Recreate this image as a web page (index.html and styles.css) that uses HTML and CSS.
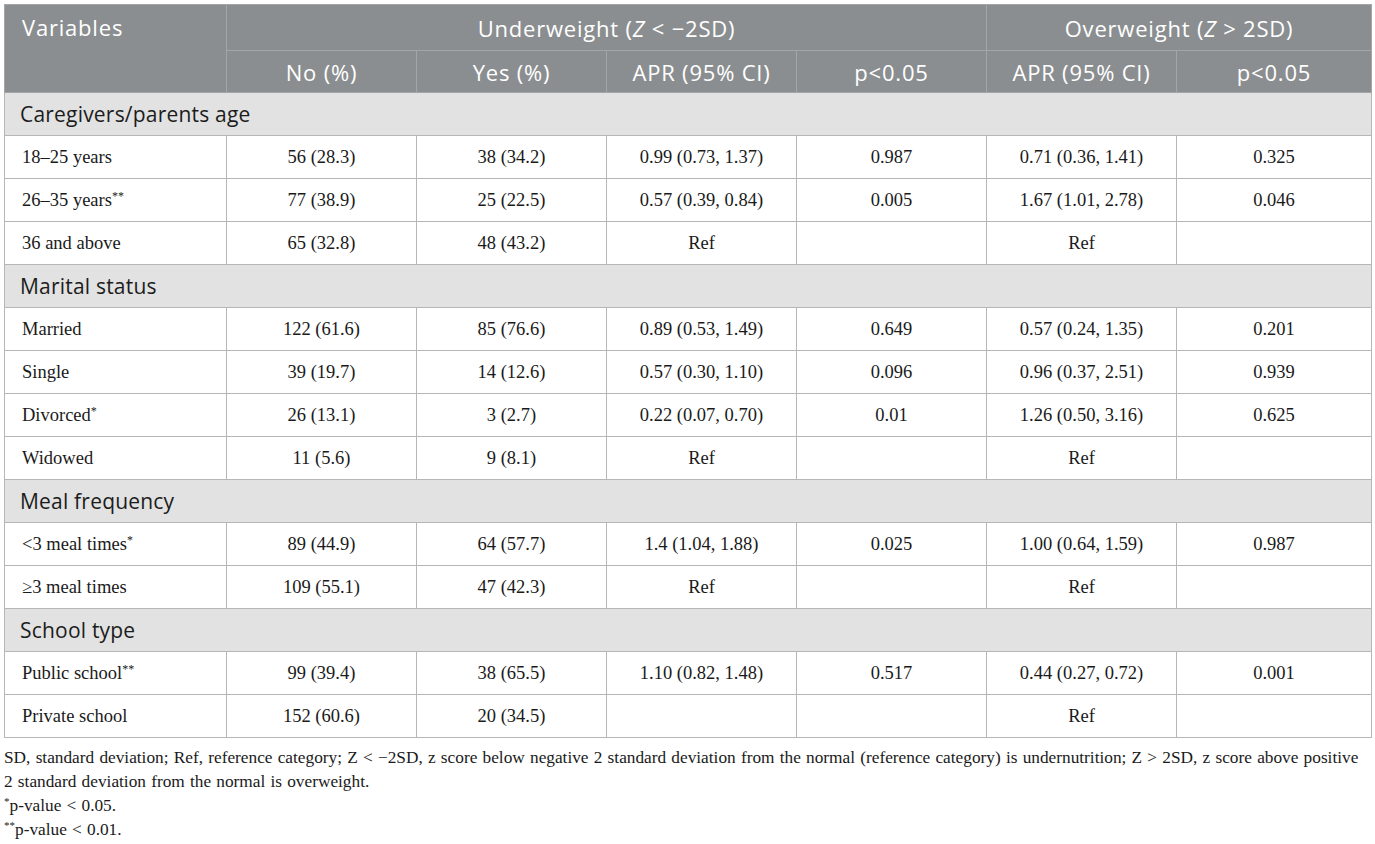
FILE: index.html
```html
<!DOCTYPE html>
<html lang="en">
<head>
  <meta charset="UTF-8">
  <title>Table: Factors associated with underweight and overweight</title>
  <link rel="stylesheet" href="styles.css">
</head>
<body>

<table class="data-table">
  <colgroup>
    <col class="col-var">
    <col class="col-num">
    <col class="col-num">
    <col class="col-num">
    <col class="col-num">
    <col class="col-num">
    <col class="col-last">
  </colgroup>
  <thead>
    <tr class="head-top">
      <th rowspan="2" class="var-head">Variables</th>
      <th colspan="4">Underweight (<i>Z</i> &lt; &minus;2SD)</th>
      <th colspan="2">Overweight (<i>Z</i> &gt; 2SD)</th>
    </tr>
    <tr class="head-sub">
      <th>No (%)</th>
      <th>Yes (%)</th>
      <th>APR (95% CI)</th>
      <th>p&lt;0.05</th>
      <th>APR (95% CI)</th>
      <th>p&lt;0.05</th>
    </tr>
  </thead>
  <tbody>
    <tr class="section"><td colspan="7">Caregivers/parents age</td></tr>
    <tr><td>18&ndash;25 years</td><td>56 (28.3)</td><td>38 (34.2)</td><td>0.99 (0.73, 1.37)</td><td>0.987</td><td>0.71 (0.36, 1.41)</td><td>0.325</td></tr>
    <tr><td>26&ndash;35 years<sup>**</sup></td><td>77 (38.9)</td><td>25 (22.5)</td><td>0.57 (0.39, 0.84)</td><td>0.005</td><td>1.67 (1.01, 2.78)</td><td>0.046</td></tr>
    <tr><td>36 and above</td><td>65 (32.8)</td><td>48 (43.2)</td><td>Ref</td><td></td><td>Ref</td><td></td></tr>

    <tr class="section"><td colspan="7">Marital status</td></tr>
    <tr><td>Married</td><td>122 (61.6)</td><td>85 (76.6)</td><td>0.89 (0.53, 1.49)</td><td>0.649</td><td>0.57 (0.24, 1.35)</td><td>0.201</td></tr>
    <tr><td>Single</td><td>39 (19.7)</td><td>14 (12.6)</td><td>0.57 (0.30, 1.10)</td><td>0.096</td><td>0.96 (0.37, 2.51)</td><td>0.939</td></tr>
    <tr><td>Divorced<sup>*</sup></td><td>26 (13.1)</td><td>3 (2.7)</td><td>0.22 (0.07, 0.70)</td><td>0.01</td><td>1.26 (0.50, 3.16)</td><td>0.625</td></tr>
    <tr><td>Widowed</td><td>11 (5.6)</td><td>9 (8.1)</td><td>Ref</td><td></td><td>Ref</td><td></td></tr>

    <tr class="section"><td colspan="7">Meal frequency</td></tr>
    <tr><td>&lt;3 meal times<sup>*</sup></td><td>89 (44.9)</td><td>64 (57.7)</td><td>1.4 (1.04, 1.88)</td><td>0.025</td><td>1.00 (0.64, 1.59)</td><td>0.987</td></tr>
    <tr><td>&ge;3 meal times</td><td>109 (55.1)</td><td>47 (42.3)</td><td>Ref</td><td></td><td>Ref</td><td></td></tr>

    <tr class="section"><td colspan="7">School type</td></tr>
    <tr><td>Public school<sup>**</sup></td><td>99 (39.4)</td><td>38 (65.5)</td><td>1.10 (0.82, 1.48)</td><td>0.517</td><td>0.44 (0.27, 0.72)</td><td>0.001</td></tr>
    <tr><td>Private school</td><td>152 (60.6)</td><td>20 (34.5)</td><td></td><td></td><td>Ref</td><td></td></tr>
  </tbody>
</table>

<div class="notes">
  <p>SD, standard deviation; Ref, reference category; Z &lt; &minus;2SD, z score below negative 2 standard deviation from the normal (reference category) is undernutrition; Z &gt; 2SD, z score above positive<br>2 standard deviation from the normal is overweight.</p>
  <p><sup>*</sup>p-value &lt; 0.05.</p>
  <p><sup>**</sup>p-value &lt; 0.01.</p>
</div>

</body>
</html>
```

FILE: styles.css
```css
body {
  margin: 0;
  padding: 4px 5px 4px 4px;
  background: #fff;
  color: #1a1a1a;
  font-family: "Liberation Serif", "Times New Roman", serif;
}
.data-table {
  width: 1366px;
  table-layout: fixed;
  border-collapse: collapse;
  border: 1px solid #b4b7b7;
}
.col-var { width: 222px; }
.col-num { width: 190px; }
.col-last { width: 195px; }

/* header */
.data-table thead th {
  background: #8b8e90;
  color: #fff;
  font-family: "Open Sans", "Liberation Sans", sans-serif;
  font-weight: normal;
  font-size: 22px;
  letter-spacing: 0.8px;
  text-align: center;
  border: 1px solid #a3a6a8;
  padding: 0 6px;
}
.head-top th {
  height: 45px;
}
.head-sub th {
  height: 41px;
}
.data-table thead th.var-head {
  text-align: left;
  vertical-align: top;
  padding: 7px 17px 0;
}

/* body */
.data-table td {
  height: 42px;
  border: 1px solid #b4b7b7;
  text-align: center;
  font-size: 18.5px;
  padding: 0 8px;
}
.data-table td:first-child {
  text-align: left;
  padding-left: 17px;
}
.data-table sup {
  font-size: 12px;
  vertical-align: 6px;
  line-height: 0;
}
.data-table tr.section td {
  background: #e1e2e1;
  font-family: "Open Sans", "Liberation Sans", sans-serif;
  font-size: 21px;
  letter-spacing: 0.2px;
  color: #1c1c1c;
  padding-left: 15px;
}

/* notes */
.notes {
  margin-top: 8px;
  font-size: 17.3px;
  word-spacing: 0.9px;
  line-height: 24px;
}
.notes p {
  margin: 0;
}
.notes sup {
  font-size: 11px;
  vertical-align: 6px;
  line-height: 0;
}
```
